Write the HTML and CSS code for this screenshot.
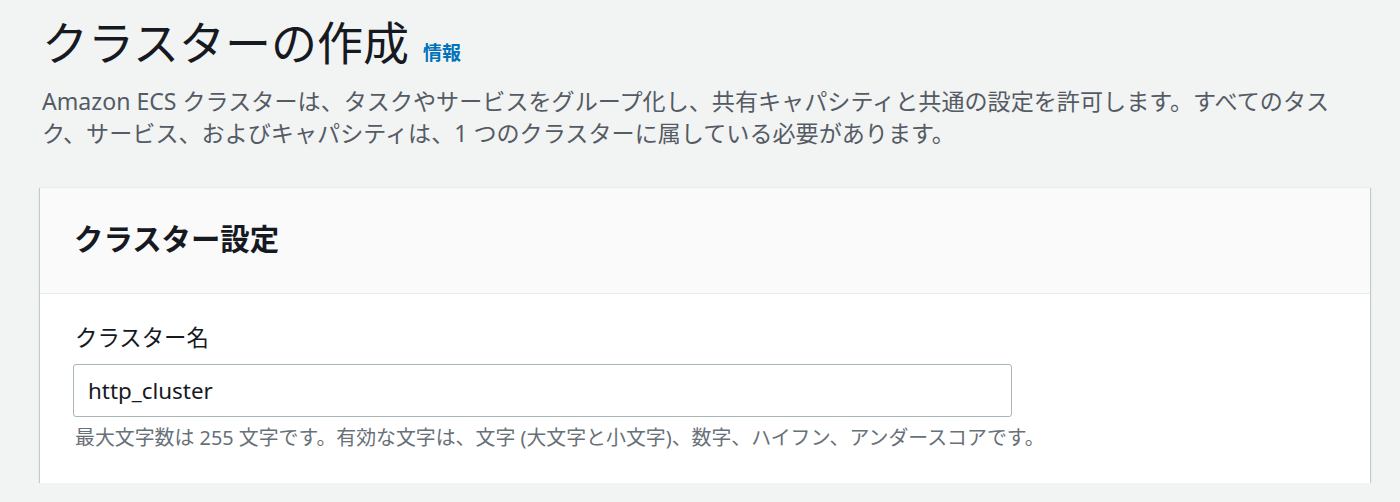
FILE: index.html
```html
<!DOCTYPE html>
<html lang="ja">
<head>
<meta charset="utf-8">
<title>クラスターの作成</title>
<link rel="stylesheet" href="styles.css">
</head>
<body>
<main class="page">
  <header class="page-header">
    <h1 class="title">クラスターの作成 <a class="info" href="#">情報</a></h1>
    <p class="desc">Amazon ECS クラスターは、タスクやサービスをグループ化し、共有キャパシティと共通の設定を許可します。すべてのタスク、サービス、およびキャパシティは、1 つのクラスターに属している必要があります。</p>
  </header>
  <section class="container">
    <div class="container-header">
      <h2 class="container-title">クラスター設定</h2>
    </div>
    <div class="container-body">
      <label class="label" for="cluster-name">クラスター名</label>
      <input class="input" id="cluster-name" type="text" value="http_cluster">
      <p class="hint">最大文字数は 255 文字です。有効な文字は、文字 (大文字と小文字)、数字、ハイフン、アンダースコアです。</p>
    </div>
  </section>
</main>
</body>
</html>
```

FILE: styles.css
```css
* { box-sizing: border-box; }
html, body { margin: 0; padding: 0; }
body {
  background: #f2f3f3;
  font-family: "Noto Sans", "Noto Sans CJK JP", sans-serif;
  color: #16191f;
}
.page {
  padding: 14px 30px 0 40px;
}
.title {
  margin: 0 0 0 2px;
  font-size: 46px;
  line-height: 56px;
  height: 56px;
  font-weight: 400;
  color: #16191f;
}
.info {
  font-size: 19px;
  line-height: 1;
  font-weight: 700;
  color: #0073bb;
  text-decoration: none;
  margin-left: 2px;
}
.desc {
  margin: 15px 0 0 2px;
  max-width: 1300px;
  font-size: 23.1px;
  line-height: 32px;
  color: #545b64;
}
.container {
  margin-top: 38px;
  background: #fff;
  border-top: 1px solid #eaeded;
  box-shadow: 0 1px 1px 0 rgba(0, 28, 36, 0.3), 1px 1px 1px 0 rgba(0, 28, 36, 0.15), -1px 1px 1px 0 rgba(0, 28, 36, 0.15);
}
.container-header {
  background: #fafafa;
  border-bottom: 1px solid #eaeded;
  padding: 33px 34px 36px;
}
.container-title {
  margin: 0;
  font-size: 29.4px;
  line-height: 36px;
  font-weight: 700;
}
.container-body {
  padding: 28px 34px 32px;
}
.label {
  display: block;
  font-size: 22.4px;
  line-height: 32px;
  margin: 0 0 10px 1px;
}
.input {
  display: block;
  width: 939px;
  height: 53px;
  margin-left: -1px;
  border: 1px solid #aab7b8;
  border-radius: 3px;
  padding: 0 14px;
  font-family: inherit;
  font-size: 22.4px;
  color: #16191f;
  background: #fff;
  outline: none;
}
.hint {
  margin: 8px 0 0 1px;
  font-size: 19.9px;
  line-height: 26px;
  color: #687078;
}
```
